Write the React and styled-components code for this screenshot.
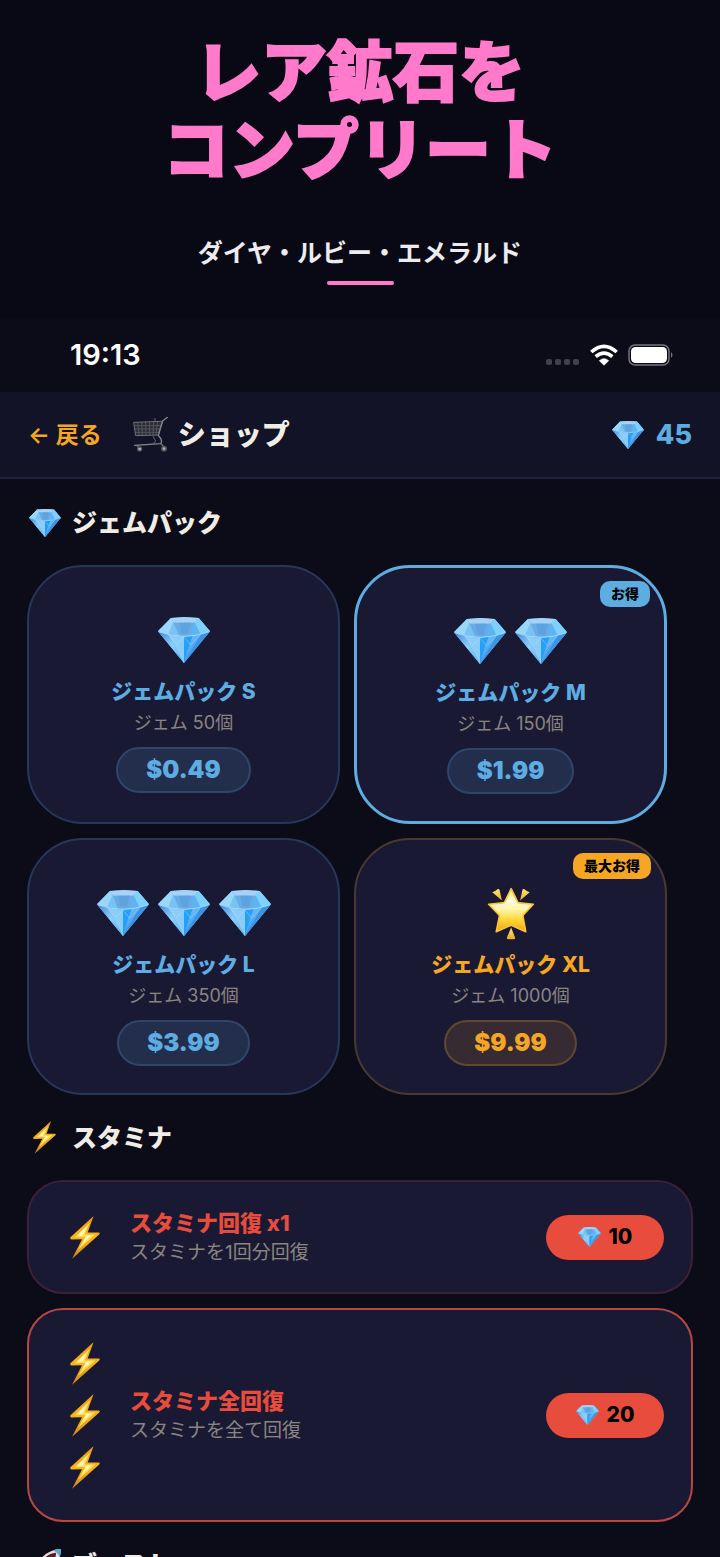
import React from 'react';
import styled, { createGlobalStyle } from 'styled-components';

const GlobalStyle = createGlobalStyle`
  * { box-sizing: border-box; }
  body {
    margin: 0;
    background: #0c0b18;
    color: #f0ede6;
    font-family: Inter, "Noto Sans CJK JP", sans-serif;
  }
  h1, h2, h3, p, ul { margin: 0; padding: 0; }
  button { font-family: inherit; cursor: pointer; }
`;

const BLUE = '#5dade2';
const GOLD = '#f5a623';
const RED = '#e74c3c';

const tones = {
  blue: { main: BLUE, line: '#27375a', fill: '#232e4d', rim: '#2d4669' },
  blueStrong: { main: BLUE, line: BLUE, fill: '#232e4d', rim: '#2d4669' },
  gold: { main: GOLD, line: '#483931', fill: '#372b33', rim: '#5f4731' },
};

const Page = styled.div`
  height: 100vh;
  overflow: hidden;
  display: flex;
  flex-direction: column;
`;

const Hero = styled.header`
  flex: none;
  display: flex;
  flex-direction: column;
  align-items: center;
  padding: 33px 28px 32px;
  background: #090916;
`;

const HeroTitle = styled.h1`
  font-size: 66px;
  line-height: 78px;
  font-weight: 900;
  text-align: center;
  color: #ff7acb;
  -webkit-text-stroke: 2px #ff7acb;
`;

const HeroSubtitle = styled.p`
  margin-top: 46px;
  font-size: 25px;
  line-height: 36px;
  font-weight: 600;
  color: #ecebef;
`;

const Underline = styled.span`
  width: 67px;
  height: 4px;
  margin-top: 10px;
  border-radius: 2px;
  background: #ff7acb;
`;

const StatusBar = styled.div`
  flex: none;
  display: flex;
  align-items: center;
  justify-content: space-between;
  height: 75px;
  padding: 0 46px 0 70px;
`;

const Clock = styled.span`
  font-size: 29px;
  line-height: 36px;
  font-weight: 600;
  color: #fff;
`;

const StatusIcons = styled.div`
  display: flex;
  align-items: center;
  gap: 10px;
`;

const AppBar = styled.div`
  flex: none;
  display: flex;
  align-items: center;
  height: 87px;
  padding: 0 28px;
  background: #121327;
  border-bottom: 2px solid #211e41;
`;

const BackButton = styled.button`
  padding: 0;
  border: 0;
  background: none;
  color: ${GOLD};
  font-size: 23px;
  line-height: 32px;
  font-weight: 600;
`;

const ScreenTitle = styled.h2`
  display: flex;
  align-items: center;
  gap: 10px;
  margin-left: 31px;
  font-size: 28px;
  line-height: 36px;
  font-weight: 800;
`;

const Balance = styled.div`
  display: flex;
  align-items: center;
  gap: 12px;
  margin-left: auto;
  color: ${BLUE};
  font-size: 27px;
  line-height: 36px;
  font-weight: 800;
`;

const Content = styled.main`
  padding: 1px 27px 0;
`;

const SectionTitle = styled.h2`
  display: flex;
  align-items: center;
  gap: 10px;
  height: 85px;
  font-size: 25px;
  line-height: 36px;
  font-weight: 800;
`;

const HeadingIcon = styled.span`
  display: flex;
  justify-content: center;
  width: 35px;
`;

const PackGrid = styled.div`
  display: flex;
  flex-wrap: wrap;
  gap: 14px;
`;

const PackCard = styled.article`
  position: relative;
  display: flex;
  flex-direction: column;
  align-items: center;
  width: 47%;
  padding: 46px 27px 27px;
  border: ${(p) => (p.$featured ? 3 : 2)}px solid ${(p) => tones[p.$tone].line};
  border-radius: 56px;
  background: #1a1934;
`;

const PackArt = styled.div`
  display: flex;
  align-items: center;
  gap: 9px;
  height: 54px;
`;

const PackName = styled.h3`
  margin-top: 11px;
  font-size: 21px;
  line-height: 28px;
  font-weight: 800;
  color: ${(p) => tones[p.$tone].main};
`;

const PackAmount = styled.p`
  margin-top: 5px;
  font-size: 18px;
  line-height: 24px;
  color: #8a8580;
`;

const PriceButton = styled.button`
  height: 46px;
  margin-top: 12px;
  padding: 0 28px;
  border: 2px solid ${(p) => tones[p.$tone].rim};
  border-radius: 23px;
  background: ${(p) => tones[p.$tone].fill};
  color: ${(p) => tones[p.$tone].main};
  font-size: 24px;
  line-height: 32px;
  font-weight: 900;
`;

const Badge = styled.span`
  position: absolute;
  top: 13px;
  right: 14px;
  padding: 0 11px;
  border-radius: 10px;
  background: ${(p) => tones[p.$tone].main};
  color: #000;
  font-size: 14px;
  line-height: 26px;
  font-weight: 800;
`;

const RefillList = styled.ul`
  display: flex;
  flex-direction: column;
  gap: 14px;
  list-style: none;
`;

const RefillRow = styled.li`
  display: flex;
  align-items: center;
  gap: 17px;
  padding: 27px;
  border: 2px solid ${(p) => (p.$featured ? '#b8473f' : '#3a2138')};
  border-radius: 36px;
  background: #1a1934;
`;

const BoltStack = styled.div`
  display: flex;
  flex-direction: column;
  align-items: center;
  width: 57px;
`;

const BoltCell = styled.span`
  display: flex;
  align-items: center;
  height: 52px;
`;

const RefillText = styled.div`
  flex: 1;
`;

const RefillName = styled.h3`
  font-size: 22px;
  line-height: 28px;
  font-weight: 800;
  color: ${RED};
`;

const RefillNote = styled.p`
  margin-top: 4px;
  font-size: 19px;
  line-height: 24px;
  color: #8a8580;
`;

const GemButton = styled.button`
  display: flex;
  align-items: center;
  justify-content: center;
  gap: 8px;
  width: 118px;
  height: 45px;
  padding: 0;
  border: 0;
  border-radius: 23px;
  background: ${RED};
  color: #000;
  font-size: 21px;
  line-height: 28px;
  font-weight: 800;
`;

function Gem({ width }) {
  return (
    <svg width={width} height={Math.round((width * 138) / 156)} viewBox="0 0 156 138" aria-hidden="true">
      <defs>
        <linearGradient id="gemLeft" x1="0" y1="0" x2="1" y2="1">
          <stop offset="0" stopColor="#3f86dc" />
          <stop offset="0.5" stopColor="#8fd0fb" />
          <stop offset="1" stopColor="#4aa9f5" />
        </linearGradient>
        <linearGradient id="gemRight" x1="0" y1="0" x2="0.6" y2="1">
          <stop offset="0" stopColor="#7fd0ff" />
          <stop offset="1" stopColor="#2f86e6" />
        </linearGradient>
      </defs>
      <path d="M39 3 L80 0 L122 3 L156 43 L78 138 L0 43 Z" fill="#62b7f5" />
      <path d="M39 3 L0 43 L8 50 L64 57 L46 15 Z" fill="#79c3f4" />
      <path d="M39 3 L0 43 L30 52 L46 15 Z" fill="#9ad8fa" />
      <path d="M122 3 L156 43 L148 50 L96 57 L110 15 Z" fill="#5cb4f3" />
      <path d="M122 3 L156 43 L128 53 L110 15 Z" fill="#7fd1fd" />
      <path d="M39 3 L80 0 L122 3 L108 17 L48 17 Z" fill="#a7d2f3" />
      <path d="M48 17 H108 L96 57 H64 Z" fill="#6aabe6" />
      <path d="M64 17 H98 L90 50 H70 Z" fill="#5fa2e0" />
      <path d="M0 43 Q78 72 156 43 L78 138 Z" fill="#4aa9f6" />
      <path d="M0 43 L32 54 L78 138 Z" fill="url(#gemLeft)" />
      <path d="M32 54 L78 60 L78 138 Z" fill="#8ccdf8" />
      <path d="M78 60 L78 138 L92 90 L104 58 Z" fill="#25a0f8" />
      <path d="M104 58 L128 53 L78 138 L92 90 Z" fill="url(#gemRight)" />
      <path d="M128 53 L156 43 L78 138 Z" fill="#3c92e4" />
      <path d="M32 54 L56 82 L78 60 L98 84 L128 53" fill="none" stroke="#b9e4fd" strokeWidth="2" opacity="0.6" />
      <path d="M2 44 Q78 72 154 44" fill="none" stroke="#a4dbfc" strokeWidth="3" />
    </svg>
  );
}

function Bolt({ width }) {
  return (
    <svg width={width} height={Math.round((width * 130) / 90)} viewBox="0 0 90 130" aria-hidden="true">
      <defs>
        <linearGradient id="boltEdge" x1="0" y1="0" x2="0" y2="1">
          <stop offset="0" stopColor="#e8951a" />
          <stop offset="0.5" stopColor="#f9b41c" />
          <stop offset="1" stopColor="#d98613" />
        </linearGradient>
      </defs>
      <path d="M71 0 L1 64 Q-1 70 4 71 L36 70 L6 129 L88 56 Q92 50 86 50 L53 50 Z" fill="url(#boltEdge)" />
      <path d="M60 19 L14 64 L46 63 L25 101 L76 56 L44 56 Z" fill="#ffe15c" />
      <path d="M51 31 L22 60 L50 59 L37 83 L64 59 L37 59 Z" fill="#fff6c4" />
    </svg>
  );
}

function GlowingStar() {
  return (
    <svg width="48" height="53" viewBox="0 0 145 158" aria-hidden="true">
      <defs>
        <linearGradient id="starFill" x1="0" y1="0" x2="0" y2="1">
          <stop offset="0" stopColor="#ffe98a" />
          <stop offset="0.3" stopColor="#fffbe0" />
          <stop offset="0.5" stopColor="#fff3a0" />
          <stop offset="0.75" stopColor="#ffd42e" />
          <stop offset="1" stopColor="#ee9f1c" />
        </linearGradient>
        <linearGradient id="rayFill" x1="0" y1="0" x2="0" y2="1">
          <stop offset="0" stopColor="#ffe777" />
          <stop offset="1" stopColor="#eda828" />
        </linearGradient>
      </defs>
      <path
        d="M73 4 L92 43 Q94 47 98 47 L140 51 L111 82 Q108 85 109 89 L117 134 L77 116 Q73 114 69 116 L28 134 L37 89 Q38 85 35 82 L5 51 L48 47 Q52 47 54 43 Z"
        fill="url(#starFill)"
        stroke="#fac33a"
        strokeWidth="5"
        strokeLinejoin="round"
      />
      <path d="M16 15 Q25 12 33 5 Q37 4 38 8 L45 40 Z" fill="url(#rayFill)" />
      <path d="M129 15 Q120 12 112 5 Q108 4 107 8 L100 40 Z" fill="url(#rayFill)" />
      <path d="M73 121 L60 152 Q60 157 65 157 H81 Q86 157 85 152 Z" fill="url(#rayFill)" />
    </svg>
  );
}

function Cart() {
  return (
    <svg width="35" height="35" viewBox="0 0 105 105" fill="none" aria-hidden="true">
      <path d="M2 16 L88 13 L76 54 L8 56 Z" fill="#2b2b35" />
      <path d="M3 26 H84 M4 36 H81 M6 46 H79" stroke="#55555e" strokeWidth="3" />
      <path d="M14 15 L18 56 M26 15 L28 56 M38 14 L39 56 M50 13 V56 M62 13 L60 55 M74 12 L69 55" stroke="#55555e" strokeWidth="3" />
      <path d="M2 16 L88 13 L76 54 L8 56 Z" stroke="#6f6f76" strokeWidth="3" />
      <path d="M103 1 L89 12 L76 55 L84 66 Q88 77 82 80 L5 85" stroke="#85858b" strokeWidth="4" strokeLinecap="round" strokeLinejoin="round" />
      <path d="M60 58 L68 72 L60 80 M66 3 V14" stroke="#65656d" strokeWidth="3" />
      <path d="M84 80 L92 90 M12 86 L20 94" stroke="#777" strokeWidth="4" />
      <circle cx="93" cy="95" r="9" fill="#55555d" />
      <circle cx="93" cy="95" r="4" fill="#b3b3b8" />
      <circle cx="20" cy="96" r="8" fill="#55555d" />
      <circle cx="20" cy="96" r="4" fill="#b3b3b8" />
    </svg>
  );
}

function Rocket() {
  return (
    <svg width="34" height="34" viewBox="0 0 102 102" aria-hidden="true">
      <path d="M99 3 Q66 4 42 28 L26 50 L54 78 L78 58 Q98 34 99 3 Z" fill="#e3dfe2" />
      <path d="M84 14 Q60 16 46 34 L34 52 L52 70 L72 50 Q84 32 84 14 Z" fill="#5c1c24" />
      <path d="M99 3 Q86 3 74 7 Q88 12 96 28 Q99 16 99 3 Z" fill="#5aa6cf" />
      <path d="M46 26 L20 34 L8 58 L32 50 Z" fill="#c9322f" />
      <path d="M78 56 L68 84 L44 96 L54 74 Z" fill="#c9322f" />
      <circle cx="64" cy="40" r="9" fill="#262b38" />
      <path d="M30 58 L6 98 L46 76 Z" fill="#f7a62a" />
    </svg>
  );
}

function SignalDots() {
  return (
    <svg width="34" height="22" viewBox="0 0 34 22" fill="#413f4b" aria-hidden="true">
      <rect x="0" y="15" width="6" height="6" rx="2" />
      <rect x="9" y="15" width="6" height="6" rx="2" />
      <rect x="18" y="15" width="6" height="6" rx="2" />
      <rect x="27" y="15" width="6" height="6" rx="2" />
    </svg>
  );
}

function Wifi() {
  return (
    <svg width="28" height="22" viewBox="0 0 84 66" fill="none" stroke="#fff" aria-hidden="true">
      <path d="M4 24 Q42 -10 80 24" strokeWidth="11" />
      <path d="M17 38 Q42 17 67 38" strokeWidth="11" />
      <path d="M28 50 Q42 38 56 50 L42 64 Z" fill="#fff" strokeWidth="2" strokeLinejoin="round" />
    </svg>
  );
}

function Battery() {
  return (
    <svg width="46" height="22" viewBox="0 0 46 22" aria-hidden="true">
      <rect x="1" y="1" width="40" height="20" rx="6" fill="none" stroke="#76757d" strokeWidth="1.5" />
      <rect x="3" y="3" width="36" height="16" rx="4.5" fill="#fff" />
      <path d="M43 8 Q46 11 43 14 Z" fill="#76757d" />
    </svg>
  );
}

const packs = [
  { name: 'ジェムパック S', amount: 'ジェム 50個', price: '$0.49', gems: 1, tone: 'blue' },
  { name: 'ジェムパック M', amount: 'ジェム 150個', price: '$1.99', gems: 2, tone: 'blueStrong', badge: 'お得', featured: true },
  { name: 'ジェムパック L', amount: 'ジェム 350個', price: '$3.99', gems: 3, tone: 'blue' },
  { name: 'ジェムパック XL', amount: 'ジェム 1000個', price: '$9.99', gems: 0, tone: 'gold', badge: '最大お得' },
];

const refills = [
  { name: 'スタミナ回復 x1', note: 'スタミナを1回分回復', cost: 10, bolts: 1 },
  { name: 'スタミナ全回復', note: 'スタミナを全て回復', cost: 20, bolts: 3, featured: true },
];

export default function App() {
  return (
    <Page>
      <GlobalStyle />
      <Hero>
        <HeroTitle>
          レア鉱石を
          <br />
          コンプリート
        </HeroTitle>
        <HeroSubtitle>ダイヤ・ルビー・エメラルド</HeroSubtitle>
        <Underline />
      </Hero>
      <StatusBar>
        <Clock>19:13</Clock>
        <StatusIcons>
          <SignalDots />
          <Wifi />
          <Battery />
        </StatusIcons>
      </StatusBar>
      <AppBar>
        <BackButton type="button">← 戻る</BackButton>
        <ScreenTitle>
          <Cart />
          ショップ
        </ScreenTitle>
        <Balance>
          <Gem width={32} />
          45
        </Balance>
      </AppBar>
      <Content>
        <SectionTitle>
          <HeadingIcon>
            <Gem width={32} />
          </HeadingIcon>
          ジェムパック
        </SectionTitle>
        <PackGrid>
          {packs.map((pack) => (
            <PackCard key={pack.name} $tone={pack.tone} $featured={pack.featured}>
              {pack.badge && <Badge $tone={pack.tone}>{pack.badge}</Badge>}
              <PackArt>
                {pack.gems === 0 && <GlowingStar />}
                {Array.from({ length: pack.gems }, (_, i) => (
                  <Gem key={i} width={52} />
                ))}
              </PackArt>
              <PackName $tone={pack.tone}>{pack.name}</PackName>
              <PackAmount>{pack.amount}</PackAmount>
              <PriceButton type="button" $tone={pack.tone}>
                {pack.price}
              </PriceButton>
            </PackCard>
          ))}
        </PackGrid>
        <SectionTitle>
          <HeadingIcon>
            <Bolt width={23} />
          </HeadingIcon>
          スタミナ
        </SectionTitle>
        <RefillList>
          {refills.map((refill) => (
            <RefillRow key={refill.name} $featured={refill.featured}>
              <BoltStack>
                {Array.from({ length: refill.bolts }, (_, i) => (
                  <BoltCell key={i}>
                    <Bolt width={30} />
                  </BoltCell>
                ))}
              </BoltStack>
              <RefillText>
                <RefillName>{refill.name}</RefillName>
                <RefillNote>{refill.note}</RefillNote>
              </RefillText>
              <GemButton type="button">
                <Gem width={23} />
                {refill.cost}
              </GemButton>
            </RefillRow>
          ))}
        </RefillList>
        <SectionTitle>
          <HeadingIcon>
            <Rocket />
          </HeadingIcon>
          ブースト
        </SectionTitle>
      </Content>
    </Page>
  );
}
